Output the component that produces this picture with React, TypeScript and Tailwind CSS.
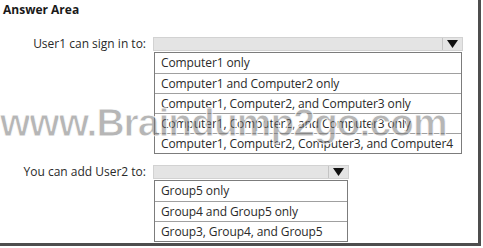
import { ReactNode } from 'react';

const font = { fontFamily: '"Open Sans", "Noto Sans", Arial, sans-serif' };

function Arrow() {
  return (
    <svg width="11" height="8" viewBox="0 0 11 8">
      <polygon points="0,0 11,0 5.5,8" fill="#111" />
    </svg>
  );
}

function Dropdown({ width, options }: { width: number; options: string[] }) {
  return (
    <div className="flex flex-col" style={{ width }}>
      <div className="flex h-[14px] bg-[#e4e4e4] border border-[#d2d2d2]">
        <div className="flex-1" />
        <div className="w-[20px] flex items-center justify-center border-l border-[#c4c4c4]">
          <Arrow />
        </div>
      </div>
      <div className="mt-[1px] ml-[1px] mr-[1px] border border-[#7c7c7c] bg-white">
        {options.map((o, i) => (
          <div
            key={i}
            className={`h-[20px] flex items-center pl-[6px] text-[12px] tracking-[-0.1px] text-[#2a2a2a] ${
              i > 0 ? 'border-t border-[#a0a0a0]' : ''
            }`}
          >
            {o}
          </div>
        ))}
      </div>
    </div>
  );
}

function Row({ label, children }: { label: string; children: ReactNode }) {
  return (
    <div className="flex items-start gap-[5px]">
      <div className="w-[148px] text-right text-[12px] text-[#2a2a2a] leading-[14px] pr-[2px]">{label}</div>
      {children}
    </div>
  );
}

export default function App() {
  return (
    <div className="relative w-[483px] h-[248px] bg-white overflow-hidden" style={font}>
      <div className="w-[481px] h-[246px] border-r-[3px] border-b-[3px] border-[#4e4e4e]">
        <div className="pl-[3px] pt-[3px] text-[12px] leading-[14px] font-bold text-[#1a1a1a]">Answer Area</div>
        <div className="mt-[20px]">
          <Row label="User1 can sign in to:">
            <Dropdown
              width={310}
              options={[
                'Computer1 only',
                'Computer1 and Computer2 only',
                'Computer1, Computer2, and Computer3 only',
                'Computer1, Computer2, and Computer3 only',
                'Computer1, Computer2, Computer3, and Computer4',
              ]}
            />
          </Row>
        </div>
        <div className="mt-[11px]">
          <Row label="You can add User2 to:">
            <Dropdown
              width={196}
              options={['Group5 only', 'Group4 and Group5 only', 'Group3, Group4, and Group5']}
            />
          </Row>
        </div>
      </div>
      {/* watermark over the lists */}
      <div
        className="absolute left-0 top-[94px] text-[39px] font-bold tracking-[-1px] text-[rgba(110,110,110,0.5)] [-webkit-text-stroke:1px_rgba(255,255,255,0.9)] whitespace-nowrap pointer-events-none"
        style={{ fontFamily: '"Liberation Sans", Arial, sans-serif' }}
      >
        www.Braindump2go.com
      </div>
    </div>
  );
}
